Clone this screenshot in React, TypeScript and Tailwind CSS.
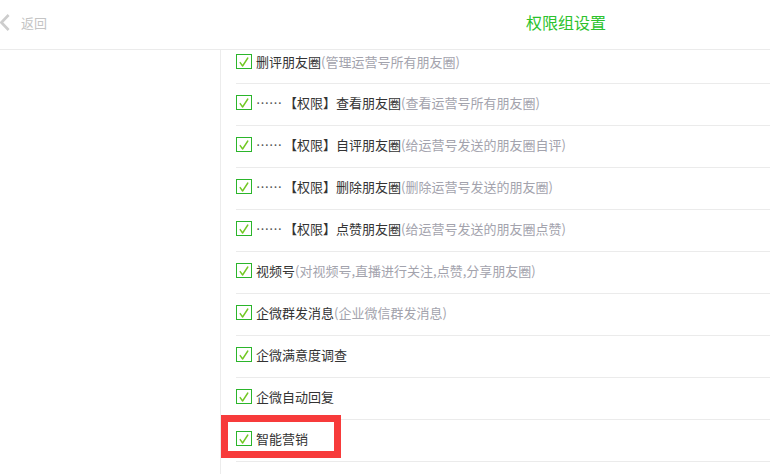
import React from "react";

type Row = { dots?: boolean; label: string; note?: string };

const rows: Row[] = [
  { label: "删评朋友圈", note: "(管理运营号所有朋友圈)" },
  { dots: true, label: "查看朋友圈", note: "(查看运营号所有朋友圈)" },
  { dots: true, label: "自评朋友圈", note: "(给运营号发送的朋友圈自评)" },
  { dots: true, label: "删除朋友圈", note: "(删除运营号发送的朋友圈)" },
  { dots: true, label: "点赞朋友圈", note: "(给运营号发送的朋友圈点赞)" },
  { label: "视频号", note: "(对视频号,直播进行关注,点赞,分享朋友圈)" },
  { label: "企微群发消息", note: "(企业微信群发消息)" },
  { label: "企微满意度调查" },
  { label: "企微自动回复" },
  { label: "智能营销" },
];

function Check() {
  return (
    <span className="flex h-[15px] w-[16px] shrink-0 items-center justify-center border border-[#2bb52b] bg-white">
      <svg width="12" height="12" viewBox="0 0 12 12">
        <path d="M2.2 6.6 L4.6 10 L9.8 2" fill="none" stroke="#72c823" strokeWidth="1.4" strokeLinecap="round" strokeLinejoin="round" />
      </svg>
    </span>
  );
}

export default function App() {
  return (
    <div
      className="relative h-[474px] w-[770px] overflow-hidden bg-white"
      style={{ fontFamily: '"Noto Sans CJK SC", "Noto Sans", sans-serif' }}
    >
      <div className="flex h-[50px] items-center border-b border-[#ebebeb] pb-[5px]">
        <div className="flex w-[526px] items-center">
          <svg width="10" height="17" viewBox="0 0 10 17">
            <path d="M8.6 1 L1.4 8.5 L8.6 16" fill="none" stroke="#cdcdcd" strokeWidth="2.6" />
          </svg>
          <span className="ml-[11px] text-[13px] leading-none text-[#c4c4c4]">返回</span>
        </div>
        <span className="text-[16px] leading-none text-[#2cc22c]">权限组设置</span>
      </div>
      <div className="flex">
        <div className="h-[430px] w-[221px] border-r border-[#ececec]" />
        <div className="flex-1 pl-[15px]">
          {rows.map((r, i) => (
            <div
              key={i}
              className={`flex items-start border-b border-[#ebebeb] ${i === 0 ? "h-[34px] pt-[3px]" : "h-[42px] pt-[10px]"}`}
            >
              <div className="flex h-[17px] items-center">
                <Check />
                <span className="ml-[4px] whitespace-nowrap text-[13px] leading-none text-[#333]">
                  {r.dots && <span className="text-[#555]">……</span>}
                  {r.dots && <span className="ml-[2px]">【权限】</span>}
                  {r.label}
                  {r.note && <span className="text-[#a3a3ad]">{r.note}</span>}
                </span>
              </div>
            </div>
          ))}
        </div>
      </div>
      <div className="absolute left-[221px] top-[415px] h-[43px] w-[120px] border-[7px] border-[#f73b3b]" />
    </div>
  );
}
